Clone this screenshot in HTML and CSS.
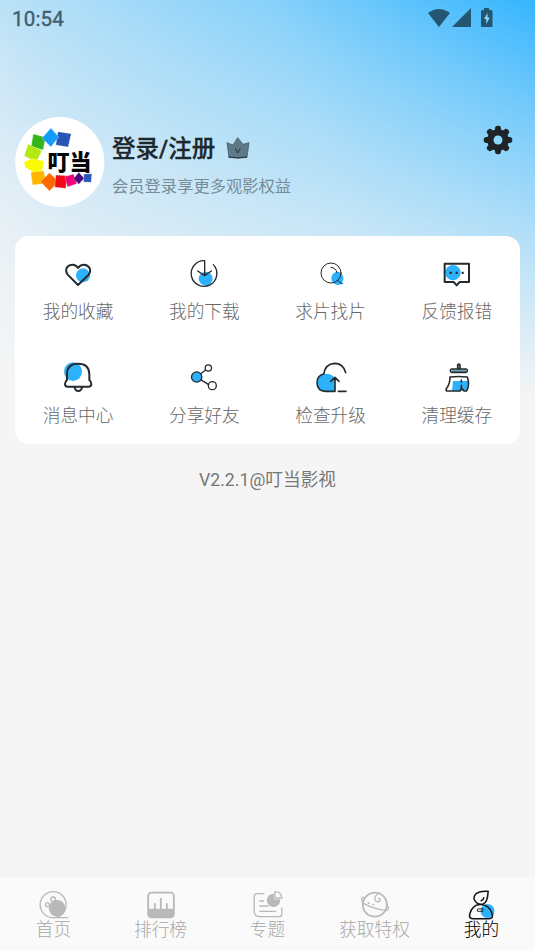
FILE: index.html
```html
<!DOCTYPE html>
<html lang="zh-CN">
<head>
<meta charset="utf-8">
<title>我的</title>
<link rel="stylesheet" href="styles.css">
</head>
<body>
<div class="screen">
  <header class="status">
    <span class="clock">10:54</span>
    <svg class="status-icons" viewBox="0 0 66 20">
      <path d="M0 5Q11-3 22 5L11 19Z"/>
      <path d="M43 0V19H24Z"/>
      <path d="M56 0h5v2h2q1.500 0 1.500 1.500V18q0 1-1 1H54q-1 0-1-1V3.500Q53 2 54.500 2H56Z"/>
      <path class="bolt" d="M59.500 5l-3.500 6h2.300v5l3.500-6.500h-2.300Z"/>
    </svg>
  </header>

  <section class="profile">
    <svg class="avatar" viewBox="14.500 21 270 270">
      <ellipse cx="149" cy="156" rx="134" ry="135" fill="#fff"/>
      <g stroke="#fff" stroke-width="1.500" stroke-dasharray="3 3">
        <path fill="#35b51b" d="M69 72l37 10-7 38-36-10Z"/>
        <path fill="#2854b5" d="M143 65l40 6-9 40-37-6Z"/>
        <path fill="#159cfa" d="M122 54l24 27-24 30-26-27Z"/>
        <path fill="#b4e813" d="M54 102l41 20-16 34-37-18Z"/>
        <path fill="#fbfb00" d="M42 156l22-10 36 7-3 27-24 9-28-17Z"/>
        <path fill="#ffb400" d="M62 187l39-5 7 38-41 5Z"/>
        <path fill="#ff6a00" d="M118 188l27 27-27 28-27-28Z"/>
        <path fill="#ee0a16" d="M137 195l34 2-4 38-33-3Z"/>
        <path fill="#f00078" d="M164 200l26-8 10 29-28 10Z"/>
        <path fill="#4b087b" d="M206 187l16 18-16 18-16-17Z"/>
        <path fill="#2959b9" d="M221 192l24-1-2 26-23-1Z"/>
      </g>
      <text class="avatar-text" x="112" y="179">叮当</text>
    </svg>
    <div class="who">
      <div class="name">登录/注册
        <svg class="crown" viewBox="363 34 72 66">
          <path d="M366 51l18 7 14-22 16 20 18-5-6 44q-27 5-54 0Z" fill="#607986" stroke="#4a606c" stroke-width="2.500" stroke-linejoin="round"/>
          <path d="M391 68l7 14 8-14M370 94q28 5 56 0" fill="none" stroke="#26363f" stroke-width="3"/>
        </svg>
      </div>
      <div class="hint">会员登录享更多观影权益</div>
    </div>
    <svg class="gear" viewBox="-15 -15 30 30">
      <g fill="#1e2427">
        <circle r="10.800"/>
        <g id="teeth"><rect x="-3" y="-14.300" width="6" height="28.600" rx="2.700"/><rect x="-14.300" y="-3" width="28.600" height="6" rx="2.700"/></g>
        <use href="#teeth" transform="rotate(45)"/>
      </g>
      <circle class="gear-hole" r="4.500"/>
    </svg>
  </section>

  <main class="card">
    <div class="cell">
      <svg class="icon" viewBox="90 18 108 108">
        <circle class="blue" cx="159" cy="76" r="21"/>
        <path class="bold" d="M144 105L113 74Q105 62 111 52Q117 44 128 44Q138 44 144 54Q151 44 161 44Q172 44 178 53Q184 63 176 74Z"/>
      </svg><span>我的收藏</span>
    </div>
    <div class="cell">
      <svg class="icon" viewBox="469 18 108 108">
        <circle class="blue" cx="528" cy="86" r="21"/>
        <path class="thin" d="M525 74V32A38.500 38.500 0 1 0 551 44M525 70V76M504 63l21 14 20-14"/>
      </svg><span>我的下载</span>
    </div>
    <div class="cell">
      <svg class="icon" viewBox="83 18 108 108">
        <path class="blue" d="M155 65a20 20 0 0 1 16 31l3 6-8 1a20 20 0 1 1-11-38Z"/>
        <circle class="hair" cx="137" cy="69" r="30"/>
        <path class="hair" d="M137 52q15 1 18 16M156 91l13 10"/>
      </svg><span>求片找片</span>
    </div>
    <div class="cell">
      <svg class="icon" viewBox="462 18 108 108">
        <circle class="blue" cx="504" cy="68" r="23"/>
        <path class="bold" d="M479 41H552V96H524L515 106L506 96H479Z"/>
        <path class="dots" d="M494 65h6v7h-6ZM512 65h6v7h-6ZM530 65h6v7h-6Z"/>
      </svg><span>反馈报错</span>
    </div>
    <div class="cell">
      <svg class="icon" viewBox="90 15 108 108">
        <ellipse class="blue" cx="129" cy="50" rx="27" ry="28"/>
        <path class="bold" d="M111 75V55Q112 26 144 26Q177 26 178 57V75Q184 80 184 87Q184 95 175 95H113Q105 95 105 87Q105 80 111 75ZM134 98q2 10 11 10t11-10"/>
      </svg><span>消息中心</span>
    </div>
    <div class="cell">
      <svg class="icon" viewBox="469 15 108 108">
        <path class="thin" d="M512 57l15-11M513 74l24 15"/>
        <circle class="blue edge" cx="501" cy="66" r="15.500"/>
        <circle class="thin" cx="536" cy="39" r="9.500"/>
        <circle class="thin" cx="548" cy="92" r="12"/>
      </svg><span>分享好友</span>
    </div>
    <div class="cell">
      <svg class="icon" viewBox="83 15 108 108">
        <path class="blue" d="M149 109H121Q95 108 95 83Q95 62 115 57Q135 54 149 68Z"/>
        <path class="med" d="M181 53Q174 25 147 25Q120 27 115 57Q95 62 95 83Q96 108 121 109H149V68M136 79L149 67L161 79M159 109h23"/>
      </svg><span>检查升级</span>
    </div>
    <div class="cell">
      <svg class="icon" viewBox="462 15 108 108">
        <path class="blue" d="M504 78h46l-4 29h-45Z"/>
        <path class="steel" d="M518 29h7v24h-7ZM500 43h43v8h-43Z"/>
        <path class="med" d="M518 41V29q3.500-4 7 0v12M500 42H543q4 1 4 5t-4 5H500q-4-1-4-5t4-5ZM495 66Q520 63 547 66Q555 88 545 108H537L530 99L525 108H485Q481 104 486 98Q495 86 495 66ZM529 75v6M529 91v10"/>
      </svg><span>清理缓存</span>
    </div>
  </main>

  <p class="version">V2.2.1@叮当影视</p>

  <nav class="tabs">
    <div class="tab">
      <svg class="icon" viewBox="106.500 51 108 108">
        <circle class="line" cx="158" cy="104" r="39"/>
        <circle class="fill" cx="170" cy="115" r="25"/>
        <circle class="line" cx="158" cy="88" r="7"/><circle class="line" cx="141" cy="104" r="6"/>
        <path class="line" d="M158 143h44"/>
      </svg><span>首页</span>
    </div>
    <div class="tab">
      <svg class="icon" viewBox="427.500 51 108 108">
        <rect class="line thick" x="443" y="68" width="77" height="74" rx="10"/>
        <path class="fill" d="M443 116h77v17q0 10-10 10h-57q-10 0-10-10Z"/>
        <path class="line thick" d="M463 102v15M481 86v31M499 102v15"/>
      </svg><span>排行榜</span>
    </div>
    <div class="tab">
      <svg class="icon" viewBox="88.500 51 108 108">
        <path class="line" d="M130 71H110q-9 0-9 9v43q0 17 17 17h57q9 0 9-9v-17M118 93h11M118 108h25M118 124h48"/>
        <path class="fill" d="M160 71v17h19a20 20 0 1 1-19-17Z"/>
        <path class="line" d="M163 65q20 0 21 19h-21Z"/>
      </svg><span>专题</span>
    </div>
    <div class="tab">
      <svg class="icon" viewBox="409.500 51 108 108">
        <circle class="line thick" cx="463" cy="104" r="36"/>
        <path class="line" d="M429 82q-7 1-5 8t6 11q33 17 67 21q7-2 7-7t-5-8M478 69q-18 7-14 21q5 9 13 4q5-7-3-9M443 98l3 2M457 103l3 1"/>
      </svg><span>获取特权</span>
    </div>
    <div class="tab active">
      <svg class="icon" viewBox="730.500 51 108 108">
        <circle class="blue" cx="801" cy="123" r="21"/>
        <path class="line dark" d="M803 64q-23-2-35 6q-12 12-5 22q9 14 25 10Q801 98 803 64ZM790 83q-1 7-8 9M766 106Q748 118 747 139Q747 146 758 146H804Q816 146 816 137Q812 114 794 106Q780 101 766 106Z"/>
        <path class="line dark fine" d="M772 117l15-1v8h-15Z"/>
      </svg><span>我的</span>
    </div>
  </nav>
</div>
</body>
</html>
```
FILE: styles.css
```css
* { box-sizing: border-box; }
body {
  margin: 0;
  font-family: Roboto, "Noto Sans CJK SC", sans-serif;
  color: #777;
}
.screen {
  height: 951px;
  display: flex;
  flex-direction: column;
  background:
    linear-gradient(to bottom, rgba(245,245,245,0) 0, #f5f5f5 400px),
    linear-gradient(250deg, #35b5fe 0, #87d1fa 251px, #bbe1f7 503px, #d3e8f6 571px, #f5f5f5 670px);
  background-size: 100% 420px, 100% 420px;
  background-repeat: no-repeat;
  background-color: #f5f5f5;
}
.status {
  height: 36px;
  display: flex;
  justify-content: space-between;
  padding: 8px 41px 0 12px;
}
.clock { font-size: 20.500px; font-weight: 400; line-height: 22px; color: #405e6d; -webkit-text-stroke: .4px #405e6d; letter-spacing: .2px; }
.status-icons { width: 66px; height: 20px; fill: #245673; }
.status-icons .bolt { fill: #8fd8ff; }
.profile {
  display: flex;
  height: 200px;
  padding: 81px 22px 0 14.500px;
}
.avatar { width: 90px; height: 90px; flex: none; }
.avatar-text { font: 900 66px "Noto Sans CJK SC", sans-serif; fill: #050505; }
.who { flex: 1; padding: 15px 0 0 7.500px; }
.name {
  display: flex;
  align-items: center;
  gap: 11px;
  font-size: 23.500px;
  line-height: 34px;
  font-weight: 500;
  color: #1d282d;
  -webkit-text-stroke: .3px #1d282d;
}
.crown { width: 24px; height: 22px; margin-top: -2px; }
.hint { font-size: 16.300px; line-height: 24px; margin-top: 9px; color: #768c98; }
.gear { width: 30px; height: 30px; margin-top: 8px; }
.gear-hole { fill: #8fd6fb; }
.card {
  margin: 0 15px;
  height: 208px;
  background: #fff;
  border-radius: 14px;
  display: grid;
  grid-template-columns: repeat(4, 1fr);
  grid-template-rows: 104px 104px;
}
.cell { display: flex; flex-direction: column; align-items: center; padding-top: 20px; }
.cell span { font-size: 17.700px; line-height: 26px; margin-top: 7px; font-weight: 300; color: #686868; }
.icon { display: block; width: 36px; height: 36px; }
.icon .blue { fill: #2eb1fb; stroke: none; }
.icon .steel { fill: #6e9fbd; }
.bold, .med, .thin, .hair { fill: none; stroke: #252a2e; stroke-linejoin: round; stroke-linecap: round; }
.bold { stroke-width: 6; }
.med { stroke-width: 4.800; }
.thin { stroke-width: 4; }
.hair { stroke-width: 3; }
.dots { fill: #20262a; }
.icon .edge { stroke: #252a2e; stroke-width: 4; }
.version { margin: 23px 0 0; text-align: center; font-size: 17.700px; line-height: 26px; }
.tabs {
  margin-top: auto;
  height: 74px;
  background: #fafafa;
  display: grid;
  grid-template-columns: repeat(5, 1fr);
}
.tab { display: flex; flex-direction: column; align-items: center; padding-top: 10px; color: #a8a8a8; }
.tab span { font-size: 17.700px; line-height: 26px; margin-top: -6px; font-weight: 300; }
.tab.active { color: #000; }
.line { fill: none; stroke: #b9b9b9; stroke-width: 4; stroke-linecap: round; stroke-linejoin: round; }
.line.thick { stroke-width: 5.500; }
.line.dark { stroke: #111; stroke-width: 4.500; }
.line.fine { stroke-width: 2.500; }
.fill { fill: #b9b9b9; }
```
